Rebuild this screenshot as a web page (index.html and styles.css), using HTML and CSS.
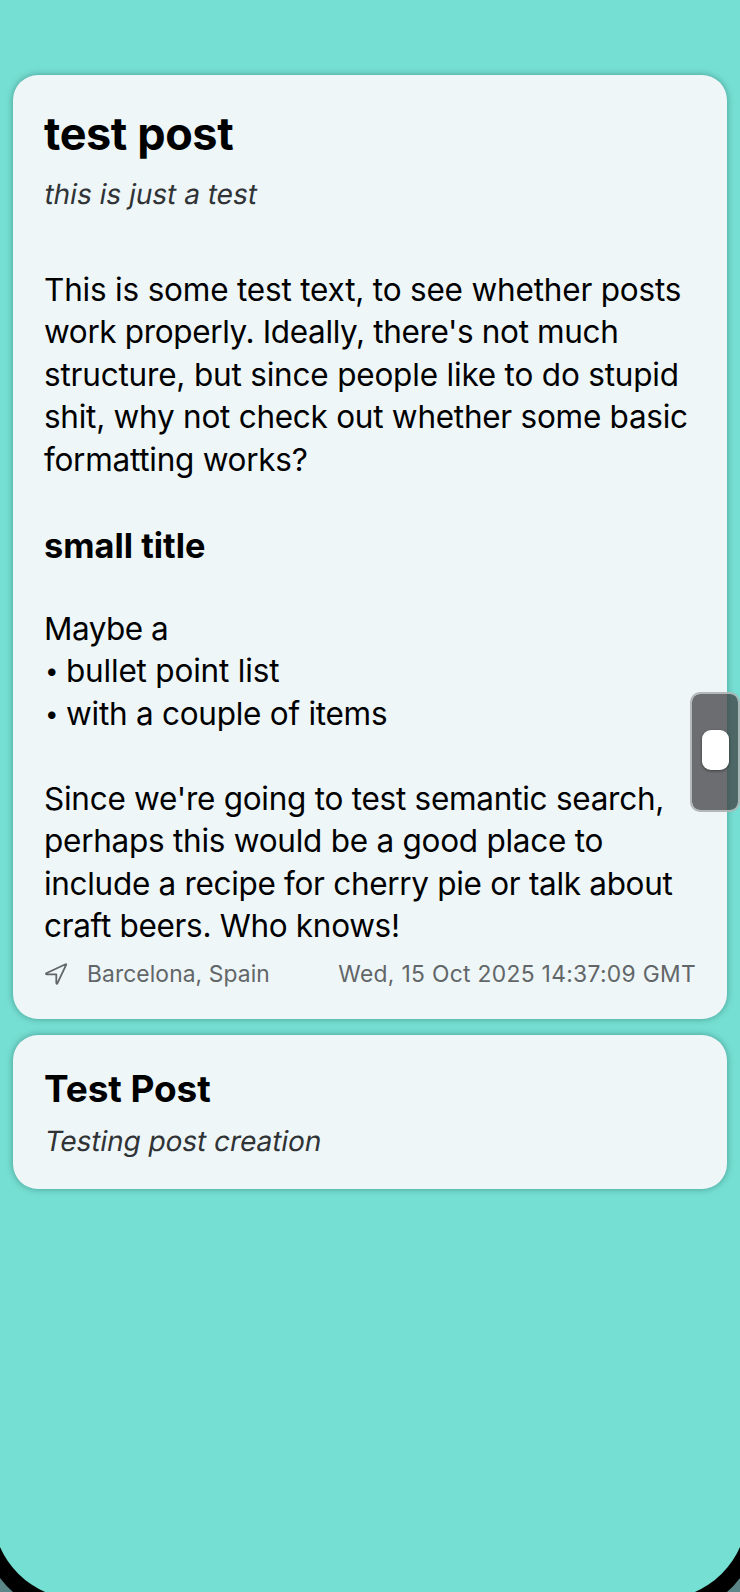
FILE: index.html
```html
<!DOCTYPE html>
<html lang="en">
<head>
<meta charset="utf-8">
<meta name="viewport" content="width=device-width">
<title>Posts</title>
<link rel="stylesheet" href="styles.css">
</head>
<body>
<main class="feed">
  <article class="card post">
    <h1 class="title">test post</h1>
    <p class="subtitle"><span class="slanted">this is just a test</span></p>
    <div class="content">
      <p><span class="loose">This is some test text, to see whether posts</span><br><span class="tight">work properly. Ideally, there's not much</span><br><span class="loose">structure, but since people like to do stupid</span><br>shit, why not check out whether some basic<br>formatting works?</p>
      <h2 class="small-title">small title</h2>
      <p class="tightest">Maybe a</p>
      <ul class="list"><li class="loose">bullet point list</li><li>with a couple of items</li></ul>
      <p class="closing">Since we're going to test semantic search,<br>perhaps this would be a good place to<br><span class="snug">include a recipe for cherry pie or talk about<br>craft beers. Who knows!</span></p>
    </div>
    <footer class="meta">
      <svg class="pin" viewBox="0 0 24 24"><path d="M2.3 11.2 21.5 2.2Q22.5 1.7 22.1 2.8L13.5 21.2Q12.7 22.5 12.3 21V12.3H3Q1.3 12.1 2.3 11.2Z"/></svg>
      <span class="place">Barcelona, Spain</span>
      <time class="date">Wed, 15 Oct 2025 14:37:09 GMT</time>
    </footer>
  </article>
  <article class="card preview">
    <h2 class="preview-title">Test Post</h2>
    <p class="subtitle preview-subtitle"><span class="slanted">Testing post creation</span></p>
  </article>
</main>
<div class="handle"><div class="knob"></div></div>
<svg class="corner left" viewBox="0 0 80 80"><path class="bezel" d="M0 0V80H80Z"/><path class="outside" d="M0 66Q6 74 13 80H0Z"/><circle class="screen" cx="80" cy="0" r="87.3"/></svg>
<svg class="corner right" viewBox="0 0 80 80"><path class="bezel" d="M0 0V80H80Z"/><path class="outside" d="M0 66Q6 74 13 80H0Z"/><circle class="screen" cx="80" cy="0" r="87.3"/></svg>
</body>
</html>
```
FILE: styles.css
```css
* { box-sizing: border-box; }
html, body { height: 100%; }
body { margin: 0; background: #76dfd3; color: #000; font-family: Inter, "Liberation Sans", sans-serif; overflow: hidden; }
h1, h2, p, ul { margin: 0; padding: 0; }
.feed { display: flex; flex-direction: column; gap: 16px; padding: 74.5px 13px 0; }
.card { background: #eef6f8; border-radius: 25px; box-shadow: 0 0 7px rgba(0, 60, 55, .42); padding: 0 31px; }
.post { height: 944px; padding-top: 31px; }
.title { font-size: 45px; line-height: 56px; font-weight: 700; letter-spacing: -.4px; white-space: nowrap; }
.subtitle { font-size: 28px; line-height: 34px; color: #303335; margin-top: 15px; white-space: nowrap; }
.slanted { display: inline-block; transform: skewX(-10deg); transform-origin: 0 65%; }
.content { margin-top: 58px; font-size: 31.5px; line-height: 42.5px; letter-spacing: -.26px; white-space: nowrap; }
.loose { letter-spacing: -.19px; }
.snug { letter-spacing: -.31px; }
.tight { letter-spacing: -.36px; }
.tightest { letter-spacing: -.5px; }
.small-title { font-size: 34.3px; line-height: 44px; letter-spacing: 0; margin: 42.5px 0 40px; }
.list { list-style: none; }
.list li { display: flex; gap: 6px; }
.list li::before { content: "•"; width: 15px; font-size: 24px; padding-left: 1px; }
.closing { margin-top: 42.5px; }
.meta { display: flex; align-items: center; height: 30px; margin-top: 11px; color: #626668; font-size: 22.8px; white-space: nowrap; }
.pin { width: 24px; height: 24px; margin-right: 19px; fill: none; stroke: currentColor; stroke-width: 1.8; stroke-linejoin: round; }
.place { letter-spacing: .1px; }
.date { margin-left: auto; letter-spacing: .32px; }
.preview { height: 154px; padding-top: 30px; }
.preview-title { font-size: 37px; line-height: 48px; letter-spacing: -.1px; }
.preview-subtitle { margin-top: 11px; letter-spacing: -.05px; }
.handle { position: absolute; left: 690px; top: 692px; width: 49.5px; height: 120px; padding: 36px 0 0 9.5px; border: 2px solid rgba(175, 180, 181, .95); border-radius: 10px; background: rgba(66, 66, 68, .76); background-clip: padding-box; }
.knob { width: 27px; height: 40px; border-radius: 9px; background: #fff; box-shadow: 0 1px 3px rgba(0, 0, 0, .45); }
.corner { position: absolute; bottom: 0; width: 80px; height: 80px; overflow: hidden; }
.left { left: 0; }
.right { right: 0; transform: scaleX(-1); }
.bezel { fill: #000; }
.outside { fill: #5b8587; }
.screen { fill: #76dfd3; }
```
